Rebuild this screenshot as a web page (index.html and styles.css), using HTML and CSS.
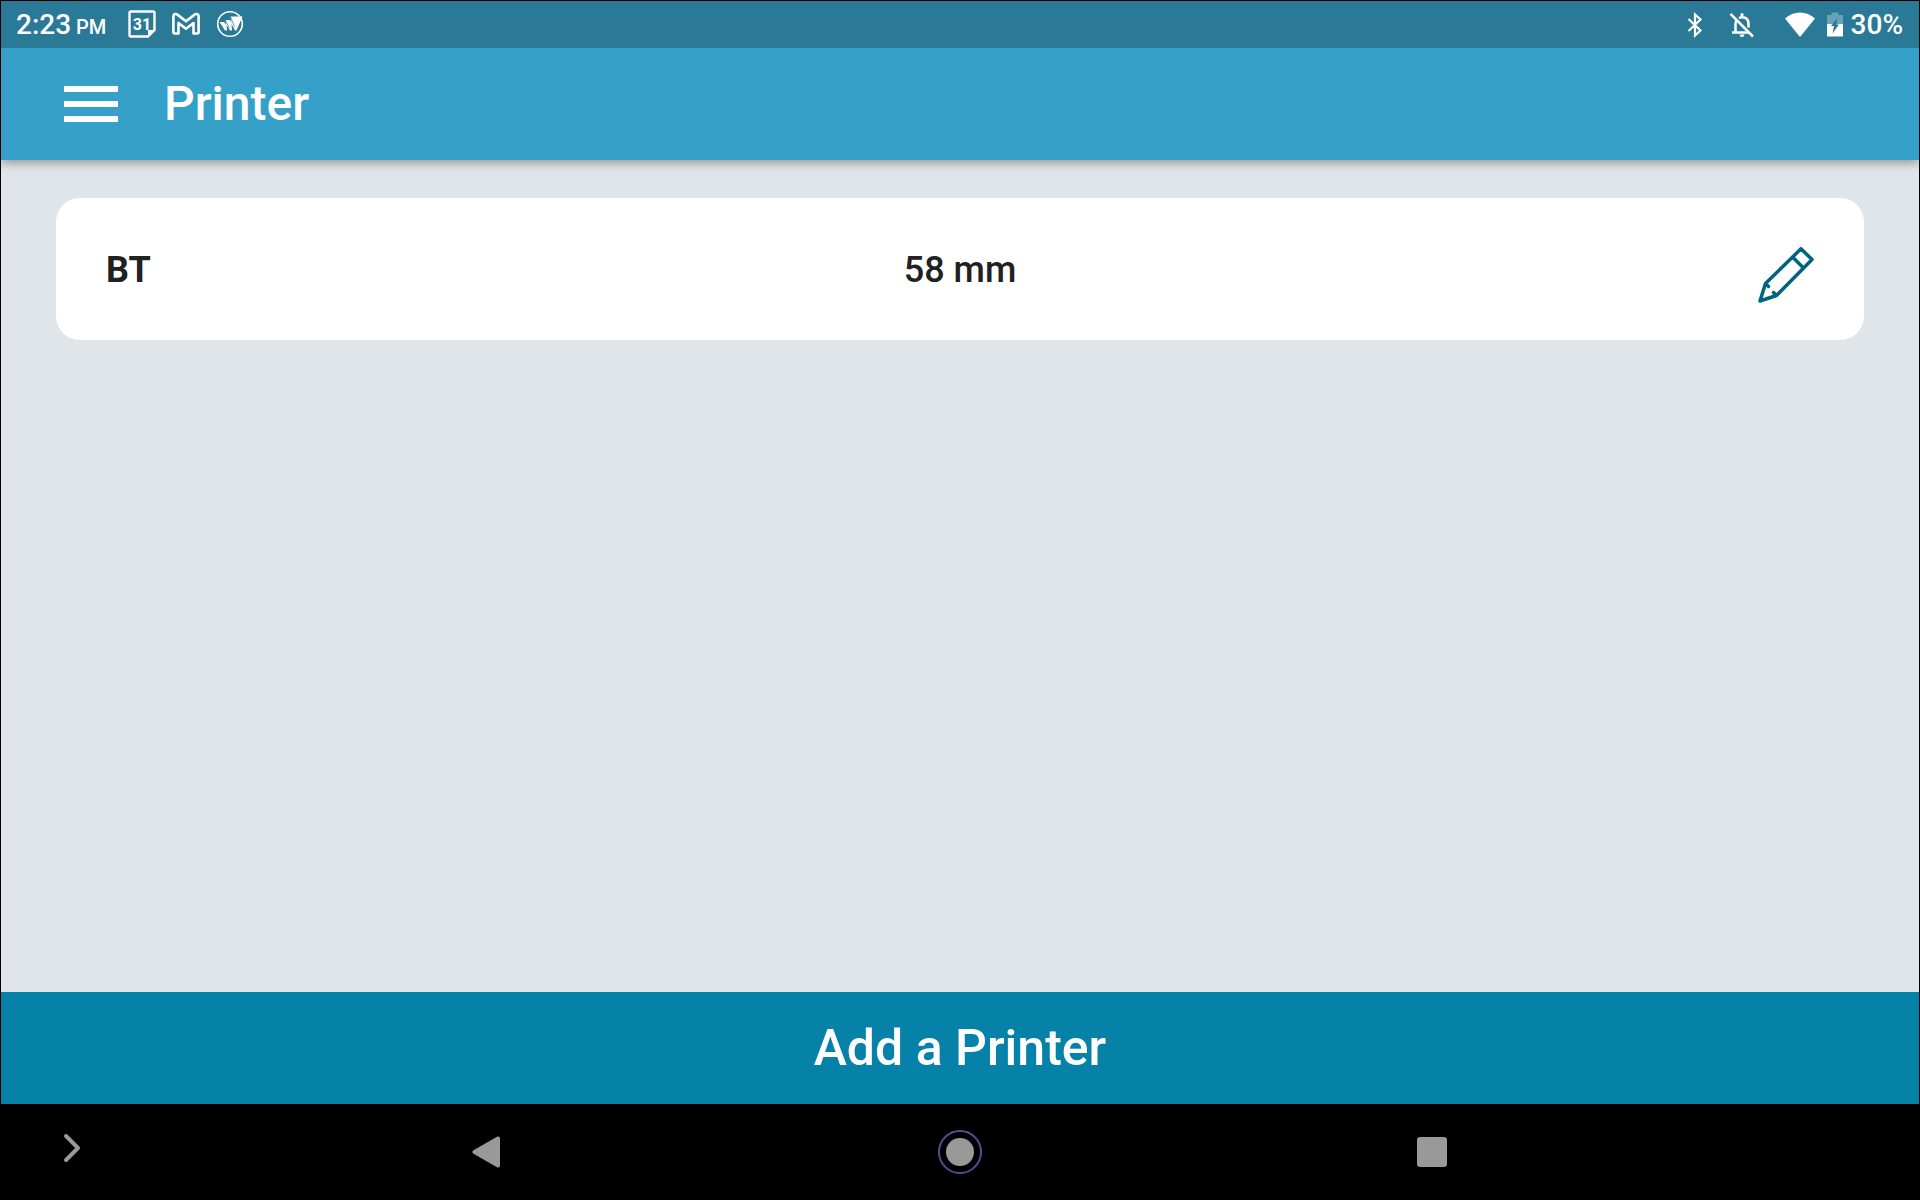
FILE: index.html
```html
<!DOCTYPE html>
<html lang="en">
<head>
    <meta charset="UTF-8">
    <meta name="viewport" content="width=device-width, initial-scale=1.0">
    <title>Printer</title>
    <link rel="stylesheet" href="styles.css">
</head>
<body>
    <!-- Status bar -->
    <div class="status-bar">
        <div class="status-time">2:23<small> PM</small></div>
        <div class="status-left">
            <svg width="28" height="28" viewBox="0 0 28 28" fill="none" stroke="#fff">
                <path d="M3 1.5H25Q26.5 1.5 26.5 3V20L20 26.500H3Q1.500 26.500 1.500 25V3Q1.500 1.500 3 1.500Z" stroke-width="2.400"/>
                <path d="M20 27V20H27Z" fill="#fff" stroke="none"/>
                <text class="calendar-day" x="14" y="20" text-anchor="middle">31</text>
            </svg>
            <svg width="28" height="28" viewBox="0 0 28 28" fill="none" stroke="#fff" stroke-width="2.600" stroke-linejoin="round">
                <path d="M1.400 6.500Q1.400 4 3.500 4Q4.700 4 6 5.100L14 11.300L22 5.100Q23.300 4 24.500 4Q26.600 4 26.600 6.500V22Q26.600 23.500 25.100 23.500H21.500V13L14 18.800L6.500 13V23.500H2.900Q1.400 23.500 1.400 22Z"/>
            </svg>
            <svg width="28" height="28" viewBox="0 0 28 28">
                <circle cx="14" cy="14" r="12.300" fill="none" stroke="#fff" stroke-width="1.600"/>
                <path d="M3.500 12H8L10 15L9.500 10H14L15.500 13L14.500 6.500H26.500L20.500 20.500H19L15.500 14L16 20.500H14L10.500 15L11 20.500H9Z" fill="#fff"/>
                <path d="M9.300 10L13.300 18M14.500 6.500L18.500 17" stroke="#297997" stroke-width=".7"/>
            </svg>
        </div>
        <div class="status-right">
            <svg width="16" height="26" viewBox="0 0 16 26" fill="none" stroke="#fff" stroke-width="2.200">
                <path d="M1.500 7L13.500 18.500L8 23.500V2.500L13.500 7.500L1.500 19"/>
            </svg>
            <svg class="bell" width="26" height="26" viewBox="0 0 26 26" fill="none" stroke="#fff" stroke-width="2.500">
                <path d="M3 20.500H20M6.500 20V12Q6.500 9.500 8 7.800M10 6.200Q11.500 5.200 13 5.200Q19.500 5.200 19.500 12V15.500"/>
                <path d="M10.500 22.500H15.500Q15.300 25 13 25T10.500 22.500ZM11.500 2.500Q11.500 1 13 1T14.500 2.500V5H11.500Z" fill="#fff" stroke="none"/>
                <path d="M1.500 1.800L24 24.500"/>
            </svg>
            <svg class="wifi" width="30" height="26" viewBox="0 0 30 26" fill="#fff">
                <path d="M0 6.500Q6.500 .5 15 .5T30 6.500L15 25Z"/>
            </svg>
            <svg class="battery" width="16" height="26" viewBox="0 0 16 26">
                <path d="M0 3H4.500V.5H11.500V3H16V12H0Z" fill="#69a1b6"/>
                <path d="M0 12H16V24.500H0Z" fill="#fff"/>
                <path d="M10 6.500L4 14H7L5.500 21.500L12 12.500H9.500Z" fill="#297997"/>
            </svg>
            <span>30%</span>
        </div>
    </div>

    <!-- App bar -->
    <header class="app-bar">
        <button class="menu-button" aria-label="Menu">
            <span></span>
            <span></span>
            <span></span>
        </button>
        <h1>Printer</h1>
    </header>

    <!-- Printer list -->
    <main class="content">
        <div class="printer-card">
            <div class="printer-name">BT</div>
            <div class="printer-size">58 mm</div>
            <button class="edit-button" aria-label="Edit printer">
                <svg width="56" height="56" viewBox="0 0 56 56" fill="none" stroke="#00647f" stroke-width="3.500" stroke-linejoin="round" stroke-linecap="round">
                    <path d="M2 54L7.500 36.500L43 1.800L54 12.500L18.500 48.500ZM34.500 10L45.500 21M7.500 36.500L10.500 39.500M15.500 45.500L18.500 48.500"/>
                </svg>
            </button>
        </div>
    </main>

    <button class="add-button">Add a Printer</button>

    <!-- Android navigation -->
    <nav class="nav-bar">
        <button class="nav-expand" aria-label="Expand">
            <svg width="20" height="32" viewBox="0 0 20 32" fill="none" stroke="#999" stroke-width="4" stroke-linecap="round" stroke-linejoin="round">
                <path d="M4 4L16 16L4 28"/>
            </svg>
        </button>
        <button aria-label="Back">
            <svg width="32" height="32" viewBox="0 0 32 32" fill="#999" stroke="#999" stroke-width="4" stroke-linejoin="round">
                <path d="M26 2.500V29.500L2.500 16Z"/>
            </svg>
        </button>
        <button aria-label="Home">
            <svg width="44" height="44" viewBox="0 0 44 44">
                <circle cx="22" cy="22" r="21" fill="none" stroke="#554c96" stroke-width="2"/>
                <circle cx="22" cy="22" r="14" fill="#999"/>
            </svg>
        </button>
        <button aria-label="Recent apps">
            <svg width="30" height="30" viewBox="0 0 30 30">
                <rect width="30" height="30" rx="3" fill="#999"/>
            </svg>
        </button>
    </nav>
</body>
</html>
```
FILE: styles.css
```css
* {
    box-sizing: border-box;
}

body {
    display: flex;
    flex-direction: column;
    min-height: 100vh;
    margin: 0;
    border: 1px solid #000;
    background: #dfe5e8;
    color: #212121;
    font-family: Roboto, sans-serif;
    font-weight: 500;
}

button {
    padding: 0;
    border: none;
    background: none;
    color: inherit;
    font: inherit;
    cursor: pointer;
}

svg {
    display: block;
}

/* Sits above the app bar so its shadow only falls downwards */
.status-bar {
    position: relative;
    display: flex;
    align-items: center;
    height: 47px;
    padding: 0 16px 0 15px;
    background: #297997;
    color: #fff;
    font-size: 28px;
}

.status-time small {
    font-size: 20px;
}

.status-left {
    display: flex;
    gap: 16px;
    margin-left: 22px;
    padding-bottom: 2px;
}

.calendar-day {
    fill: #fff;
    stroke: none;
    font-size: 16px;
    font-weight: 700;
}

.status-right {
    display: flex;
    align-items: center;
    margin-left: auto;
}

.bell {
    margin-left: 26px;
}

.wifi {
    margin-left: 30px;
}

.battery {
    margin: 0 8px 0 12px;
}

.app-bar {
    display: flex;
    align-items: center;
    gap: 46px;
    height: 112px;
    padding: 0 63px;
    background: #35a1c8;
    color: #fff;
    box-shadow: 0 2px 10px rgba(0, 0, 0, 0.4);
}

.app-bar h1 {
    margin: 0;
    padding-bottom: 2px;
    font-size: 48px;
    font-weight: 500;
}

.menu-button {
    display: flex;
    flex-direction: column;
    gap: 9px;
    width: 54px;
}

.menu-button span {
    height: 6px;
    background: #fff;
}

.content {
    flex: 1;
    padding: 38px 55px;
}

.printer-card {
    display: grid;
    grid-template-columns: 1fr auto 1fr;
    align-items: center;
    height: 142px;
    padding: 2px 50px 0;
    border-radius: 24px;
    background: #fff;
    font-size: 36px;
}

.printer-name {
    font-weight: 700;
}

.edit-button {
    justify-self: end;
    padding-top: 10px;
}

.add-button {
    height: 112px;
    background: #0682a8;
    color: #fff;
    font-size: 50px;
}

.nav-bar {
    display: grid;
    grid-template-columns: 252px repeat(3, 1fr) 252px;
    place-items: center;
    height: 95px;
    margin: 0 -1px;
    background: #000;
}

.nav-expand {
    justify-self: start;
    padding: 0 0 8px 62px;
}
```
